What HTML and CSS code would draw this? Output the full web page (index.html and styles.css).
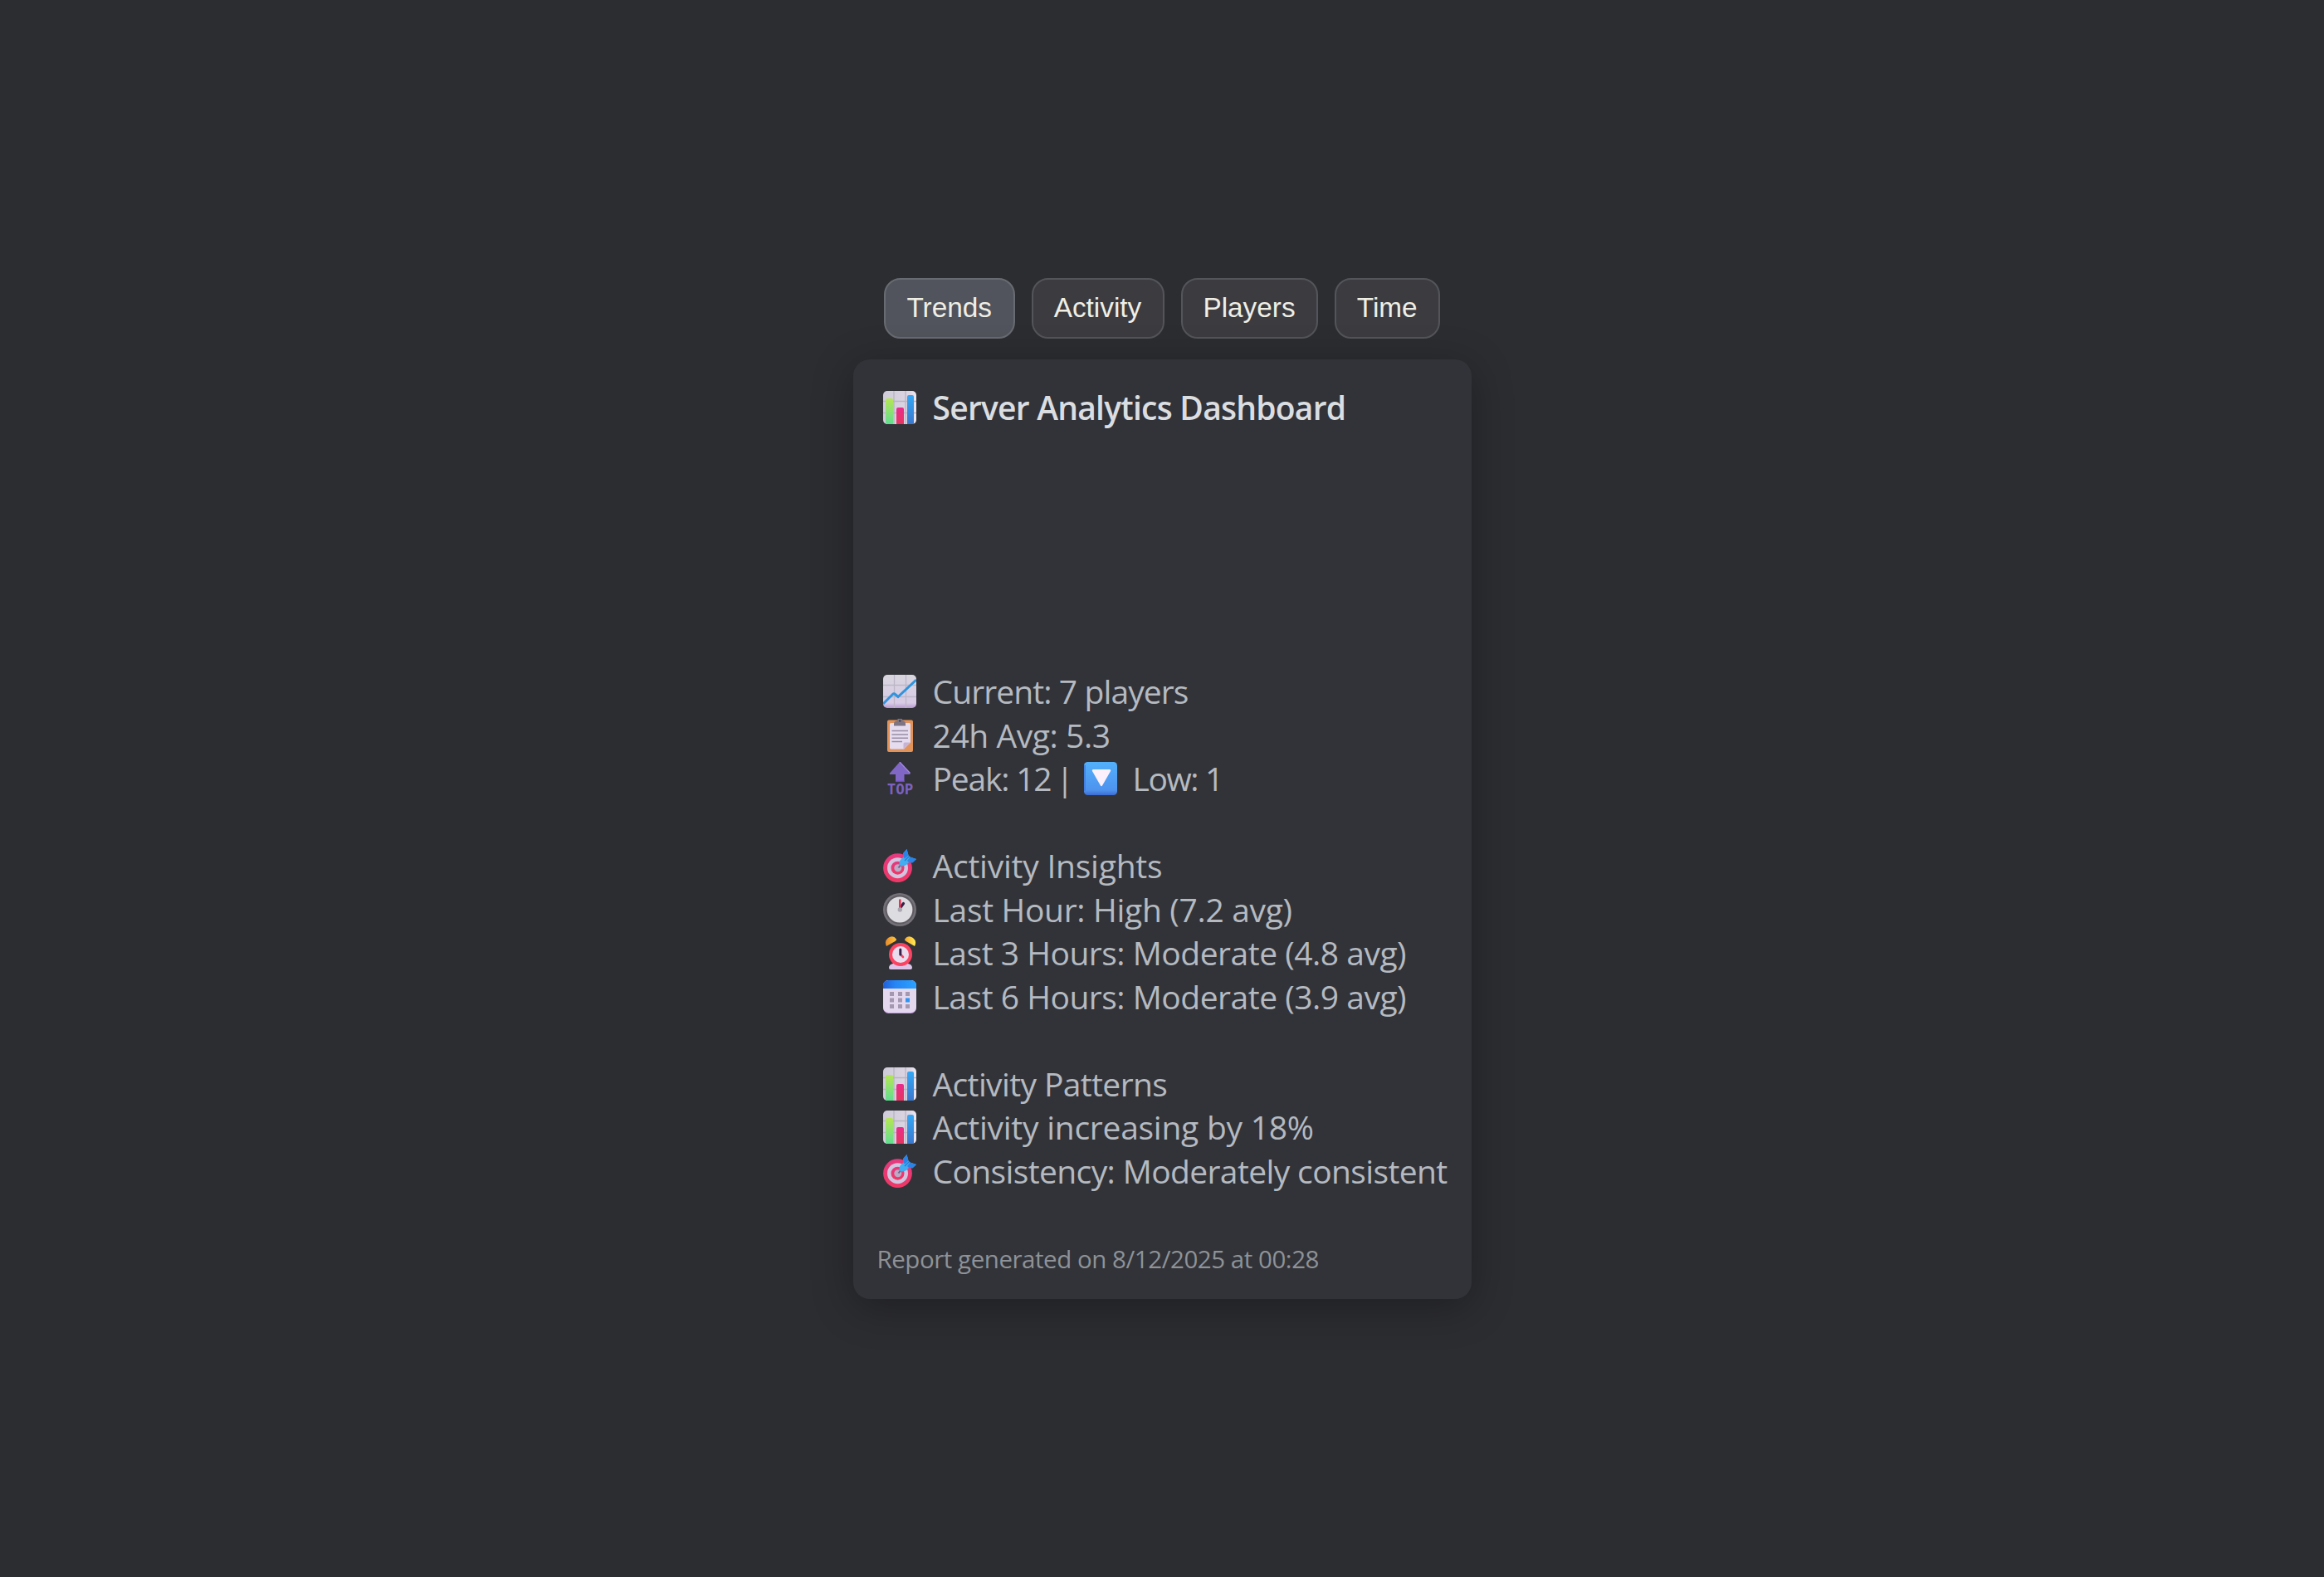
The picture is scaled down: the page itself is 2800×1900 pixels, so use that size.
FILE: index.html
```html
<!DOCTYPE html>
<html lang="en">
<head>
<meta charset="utf-8">
<title>Server Analytics Dashboard</title>
<link rel="stylesheet" href="styles.css">
</head>
<body>
<svg class="defs" width="0" height="0" aria-hidden="true">
  <defs>
    <linearGradient id="paper" x1="0" y1="0" x2="0" y2="1"><stop offset="0" stop-color="#d9d6de"/><stop offset=".85" stop-color="#d8cbe6"/><stop offset="1" stop-color="#b79bd0"/></linearGradient>
    <linearGradient id="tile" x1="0" y1="0" x2="1" y2="0"><stop offset="0" stop-color="#cfcbd8"/><stop offset=".8" stop-color="#dcd5e4"/><stop offset="1" stop-color="#efe9f3"/></linearGradient>
    <linearGradient id="green" x1="0" y1="0" x2="0" y2="1"><stop offset="0" stop-color="#b5e655"/><stop offset="1" stop-color="#62dc92"/></linearGradient>
    <linearGradient id="pink" x1="0" y1="0" x2="0" y2="1"><stop offset="0" stop-color="#ea2b8c"/><stop offset="1" stop-color="#e5365f"/></linearGradient>
    <linearGradient id="blue" x1="0" y1="0" x2="0" y2="1"><stop offset="0" stop-color="#34a8f6"/><stop offset="1" stop-color="#3b78cd"/></linearGradient>
    <linearGradient id="key" x1="0" y1="0" x2="0" y2="1"><stop offset="0" stop-color="#52b0fb"/><stop offset=".85" stop-color="#4e93ee"/><stop offset="1" stop-color="#3d6bd3"/></linearGradient>
    <linearGradient id="cal" x1="0" y1="0" x2="1" y2="0"><stop offset="0" stop-color="#1f5fd6"/><stop offset=".35" stop-color="#2585f5"/><stop offset="1" stop-color="#2ba2ff"/></linearGradient>
    <linearGradient id="bell" x1="0" y1="0" x2="1" y2="0"><stop offset="0" stop-color="#e58a2c"/><stop offset="1" stop-color="#ffc53a"/></linearGradient>
    <linearGradient id="bell2" x1="0" y1="0" x2="1" y2="0"><stop offset="0" stop-color="#f5a62d"/><stop offset="1" stop-color="#ffee55"/></linearGradient>
    <linearGradient id="red" x1="0" y1="0" x2="0" y2="1"><stop offset="0" stop-color="#e33a80"/><stop offset="1" stop-color="#ef3764"/></linearGradient>
  </defs>
  <symbol id="bars" viewBox="0 0 40 40">
    <rect width="40" height="40" rx="5" fill="url(#tile)"/>
    <path d="M13 0V40M27 0V40M0 12.5H40M0 26.5H40" stroke="#b9b4c1" stroke-width="1.3"/>
    <path d="M3 40V11q0-2 2-2h5q2 0 2 2V40z" fill="url(#green)"/>
    <path d="M16 40V22q0-2 2-2h5q2 0 2 2V40z" fill="url(#pink)"/>
    <path d="M29 40V7q0-2 2-2h4q2 0 2 2V40z" fill="url(#blue)"/>
  </symbol>
  <symbol id="trend" viewBox="0 0 40 40">
    <rect width="40" height="40" rx="5" fill="url(#paper)"/>
    <path d="M13.500 0V40M27.500 0V40M0 12.500H40M0 26.500H40" stroke="#bdb6c7" stroke-width="1.300"/>
    <path d="M0 35L11.500 23.500q1.500-1.300 3 0L18 26.500 40 6" fill="none" stroke="#2f94dd" stroke-width="3"/>
  </symbol>
  <symbol id="clipboard" viewBox="0 0 40 40">
    <rect x="5" y="1.500" width="31" height="38.500" rx="2" fill="#e2935a"/>
    <path d="M9.500 5H31.500Q33 5 33 6.500V28.500L25 36.500H9.500Q8 36.500 8 35V6.500Q8 5 9.500 5z" fill="#e6dcf0"/>
    <path d="M24.500 36.500V30q0-1.500 1.500-1.500H33z" fill="#c5b4d6"/>
    <path d="M13 8.500V6q0-3.500 4-3.500A3.200 3.200 0 0 1 23.500 2.500Q27 2.500 27 6V8.500z" fill="#7d7484"/>
    <circle cx="20.200" cy="2.500" r="1.200" fill="#463f4c"/>
    <path d="M10.500 14.500H30M10.500 19H30M10.500 23.300H30M10.500 27.500H23" stroke="#988da3" stroke-width="1.500"/>
  </symbol>
  <symbol id="top" viewBox="0 0 40 40">
    <path d="M20 0L32.500 13.500Q33 15 31.500 15H25.500V24H15V15H9Q7.300 15 8 13.500z" fill="#8067c5"/>
    <path d="M20 0L32.500 13.500" stroke="#a28be0" stroke-width="1.200"/><path d="M15 23.400H25.500" stroke="#7442e0" stroke-width="1.400"/>
    <text x="4.800" y="39.200" class="top-label" textLength="31.500" lengthAdjust="spacingAndGlyphs">TOP</text>
  </symbol>
  <symbol id="down" viewBox="0 0 40 40">
    <rect width="40" height="40" rx="4.500" fill="url(#key)"/>
    <path d="M1 4V35" stroke="#3d79dc" stroke-width="1.500"/>
    <path d="M11 10.300H31L21 28z" fill="#fbf1fd" stroke="#fbf1fd" stroke-width="2.400" stroke-linejoin="round"/>
  </symbol>
  <symbol id="target" viewBox="0 0 40 40">
    <circle cx="17.500" cy="22.700" r="17.400" fill="url(#red)"/>
    <circle cx="17.500" cy="22.700" r="12.500" fill="#d2c4df"/>
    <circle cx="17.500" cy="22.700" r="8" fill="url(#red)"/>
    <circle cx="17.800" cy="22.700" r="4.500" fill="#bba9c6"/>
    <path d="M18.500 22.500L22 18" stroke="#70628c" stroke-width="2"/>
    <path d="M19.500 18Q19 14.500 22 12L24.500 9.500 24.200 5 28.500 0 30.500 7.500 32.500 9.500 40 12 35.500 16.300 31 16 28 19Q24 21.500 20 19.500z" fill="#43adf0"/>
    <path d="M24.200 5L28.500 0 30.500 7.500 26 11.500 24.500 9.500zM32.500 9.500L40 12 35.500 16.300 31 16 29 14z" fill="#2b83e6"/>
    <path d="M26 14L31.500 8.500" stroke="#2877d0" stroke-width="1.200"/>
  </symbol>
  <symbol id="clock" viewBox="0 0 40 40">
    <circle cx="20" cy="20" r="20" fill="#747178"/>
    <circle cx="20" cy="20" r="17.500" fill="#5f5b62"/>
    <circle cx="20" cy="20" r="15.400" fill="#dddce0"/>
    <path d="M20.500 18L24.500 12.500" stroke="#382049" stroke-width="3.200" stroke-linecap="round"/>
    <path d="M20.300 18V8.500" stroke="#e33558" stroke-width="2.600" stroke-linecap="round"/>
    <circle cx="20.300" cy="20" r="2.700" fill="#aaa7b2"/>
  </symbol>
  <symbol id="alarm" viewBox="0 0 40 40">
    <path d="M7 38Q7 34 12 33H30Q35 34 35 38 35 40 33 40H9Q7 40 7 38z" fill="#dcc5e9"/>
    <path d="M4 12Q1 6 6 2 12-2 16 3.500 16 5 14.500 6z" fill="url(#bell)"/>
    <path d="M38 12Q41 6 36 2 30-2 26 3.500 26 5 27.500 6z" fill="url(#bell2)"/>
    <circle cx="21" cy="22" r="14" fill="#fb4462"/>
    <circle cx="21" cy="22" r="10" fill="#e9dcee"/>
    <path d="M21 22L24 25" stroke="#f64564" stroke-width="2.600" stroke-linecap="round"/>
    <path d="M20.800 16V22" stroke="#392149" stroke-width="3" stroke-linecap="round"/>
  </symbol>
  <symbol id="calendar" viewBox="0 0 40 40">
    <rect width="40" height="40" rx="6.500" fill="#c39ddd"/>
    <rect width="40" height="39" rx="6.500" fill="#e3d8ee"/>
    <path d="M0 10V6.500Q0 0 6.500 0H33.500Q40 0 40 6.500V10z" fill="url(#cal)"/>
    <path d="M8 14h5v5H8zM18 14h5v5h-5zM27 14h5v5h-5zM8 21.500h5v5H8zM18 21.500h5v5h-5zM8 29h5v5H8zM18 29h5v5h-5zM27 29h5v5h-5z" fill="#a398b0"/>
    <path d="M27 21.500h5v5h-5z" fill="#2c95f4"/>
  </symbol>
</svg>
<main class="page">
  <nav class="tabs">
    <button class="tab tab-trends active">Trends</button>
    <button class="tab tab-activity">Activity</button>
    <button class="tab tab-players">Players</button>
    <button class="tab tab-time">Time</button>
  </nav>
  <section class="card">
    <h1 class="row title"><svg class="icon"><use href="#bars"/></svg><span>Server Analytics Dashboard</span></h1>
    <div class="chart"></div>
    <div class="group">
      <div class="row"><svg class="icon"><use href="#trend"/></svg><span class="t-current">Current: 7 players</span></div>
      <div class="row"><svg class="icon"><use href="#clipboard"/></svg><span class="t-avg">24h Avg: 5.3</span></div>
      <div class="row"><svg class="icon"><use href="#top"/></svg><span class="t-peak">Peak: 12<span class="divider"> |</span></span><svg class="icon icon-low"><use href="#down"/></svg><span class="t-low">Low: 1</span></div>
    </div>
    <div class="group">
      <div class="row"><svg class="icon"><use href="#target"/></svg><span class="t-insights">Activity Insights</span></div>
      <div class="row"><svg class="icon"><use href="#clock"/></svg><span class="t-hour">Last Hour: High (7.2 avg)</span></div>
      <div class="row"><svg class="icon"><use href="#alarm"/></svg><span class="t-hours">Last 3 Hours: Moderate (4.8 avg)</span></div>
      <div class="row"><svg class="icon"><use href="#calendar"/></svg><span class="t-hours">Last 6 Hours: Moderate (3.9 avg)</span></div>
    </div>
    <div class="group">
      <div class="row"><svg class="icon"><use href="#bars"/></svg><span class="t-patterns">Activity Patterns</span></div>
      <div class="row"><svg class="icon"><use href="#bars"/></svg><span class="t-increase">Activity increasing by 18%</span></div>
      <div class="row"><svg class="icon"><use href="#target"/></svg><span class="t-consistency">Consistency: Moderately consistent</span></div>
    </div>
    <footer class="foot"><span>Report generated on 8/12/2025 at 00:28</span></footer>
  </section>
</main>
</body>
</html>
```
FILE: styles.css
```css
* { box-sizing: border-box; }
body {
  margin: 0;
  background: #2c2d31;
  font-family: "Open Sans", "Noto Sans", sans-serif;
}
.defs { position: absolute; }
.page {
  min-height: 1900px;
  display: flex;
  flex-direction: column;
  align-items: center;
  justify-content: center;
  gap: 25px;
}
.tabs { display: flex; gap: 20px; }
.tab {
  height: 72.5px;
  padding: 0;
  border: 2px solid #54555a;
  border-radius: 20px;
  background: #3b3b40;
  color: #efeee5;
  font: 33.33px "Liberation Sans", Arial, sans-serif;
}
.tab.active { background: #51545c; border-color: #696b72; }
.tab-trends { width: 157.5px; }
.tab-activity { width: 160px; }
.tab-players { width: 165px; }
.tab-time { width: 127.5px; }
.card {
  width: 745px;
  height: 1132.5px;
  padding: 32px 30px 0 36.5px;
  border-radius: 20px;
  background: #323338;
  box-shadow: 0 10px 50px rgba(0, 0, 0, .3);
}
.row {
  display: flex;
  align-items: center;
  height: 52.5px;
  margin: 0;
  color: #b5bac1;
  font-size: 39px;
  font-weight: 400;
  line-height: 52.5px;
  white-space: nowrap;
}
.row.title { color: #dbdee1; font-weight: 600; letter-spacing: -.76px; }
.icon { flex: none; width: 40px; height: 40px; margin-right: 19.5px; }
.top-label { font: bold 17px "DejaVu Sans Mono", monospace; fill: #7c62c0; }
.t-current { letter-spacing: -.9px; }
.t-avg { letter-spacing: -.42px; }
.t-peak { width: 182.5px; letter-spacing: -1.2px; }
.divider { margin-left: -3px; }
.icon-low { margin-right: 18.5px; }
.t-low { letter-spacing: -1.4px; }
.t-insights { letter-spacing: -.23px; }
.t-hour { letter-spacing: -.32px; }
.t-hours { letter-spacing: -.49px; }
.t-patterns { letter-spacing: -.62px; }
.t-increase { letter-spacing: -.26px; }
.t-consistency { letter-spacing: -.62px; }
.chart { height: 290px; }
.group { margin-bottom: 52.5px; }
.foot { color: #8e9297; font-size: 29.5px; line-height: 40px; margin: 60px 0 0 -7.5px; letter-spacing: -.46px; }
```
